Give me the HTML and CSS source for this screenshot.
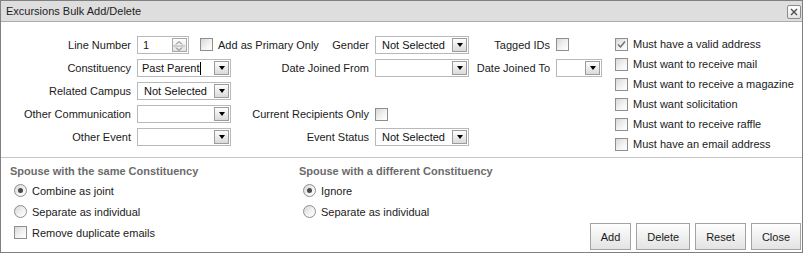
FILE: index.html
```html
<!DOCTYPE html>
<html>
<head>
<meta charset="utf-8">
<link rel="stylesheet" href="styles.css">
</head>
<body>
<div class="dialog">
  <div class="titlebar">
    <span class="title">Excursions Bulk Add/Delete</span>
    <span class="close-x"><svg width="8" height="8" viewBox="0 0 8 8"><path d="M1 1 L7 7 M7 1 L1 7" stroke="#505050" stroke-width="1.4" fill="none"/></svg></span>
  </div>
  <div class="top">
    <div class="form-grid">
      <span class="lbl c1">Line Number</span>
      <div class="row1-mid">
        <div class="spinner">
          <span class="spin-val">1</span>
          <span class="spin-btn"><svg width="12" height="14" viewBox="0 0 12 14"><polyline points="3,5.5 6,2.5 9,5.5" stroke="#707070" fill="none"/><line x1="0" y1="7" x2="12" y2="7" stroke="#b0b0b0"/><polyline points="3,8.5 6,11.5 9,8.5" stroke="#707070" fill="none"/></svg></span>
        </div>
        <span class="check-item first-check"><span class="cb"></span>Add as Primary Only</span>
        <span class="lbl push">Gender</span>
      </div>
      <div class="combo"><span class="val">Not Selected</span><span class="dd"></span></div>
      <span class="lbl">Tagged IDs</span>
      <span class="cb"></span>

      <span class="lbl c1">Constituency</span>
      <div class="combo"><span class="val edit">Past Parent<span class="caret"></span></span><span class="dd"></span></div>
      <span class="lbl">Date Joined From</span>
      <div class="combo"><span class="val"></span><span class="dd"></span></div>
      <span class="lbl">Date Joined To</span>
      <div class="combo"><span class="val"></span><span class="dd"></span></div>

      <span class="lbl c1">Related Campus</span>
      <div class="combo"><span class="val">Not Selected</span><span class="dd"></span></div>

      <span class="lbl c1">Other Communication</span>
      <div class="combo"><span class="val"></span><span class="dd"></span></div>
      <span class="lbl">Current Recipients Only</span>
      <span class="cb"></span>

      <span class="lbl c1">Other Event</span>
      <div class="combo"><span class="val"></span><span class="dd"></span></div>
      <span class="lbl">Event Status</span>
      <div class="combo"><span class="val">Not Selected</span><span class="dd"></span></div>
    </div>
    <div class="checklist">
      <div class="check-item row"><span class="cb"><svg width="11" height="11" viewBox="0 0 11 11"><polyline points="2,5.5 4.5,8 9,2.5" stroke="#707070" stroke-width="1.5" fill="none"/></svg></span>Must have a valid address</div>
      <div class="check-item row"><span class="cb"></span>Must want to receive mail</div>
      <div class="check-item row"><span class="cb"></span>Must want to receive a magazine</div>
      <div class="check-item row"><span class="cb"></span>Must want solicitation</div>
      <div class="check-item row"><span class="cb"></span>Must want to receive raffle</div>
      <div class="check-item row"><span class="cb"></span>Must have an email address</div>
    </div>
  </div>
  <div class="bottom">
    <div class="group group-left">
      <div class="group-title">Spouse with the same Constituency</div>
      <div class="opt first-opt"><span class="rb on"><span class="dot"></span></span>Combine as joint</div>
      <div class="opt"><span class="rb"></span>Separate as individual</div>
      <div class="opt"><span class="cb"></span>Remove duplicate emails</div>
    </div>
    <div class="group">
      <div class="group-title">Spouse with a different Constituency</div>
      <div class="opt first-opt"><span class="rb on"><span class="dot"></span></span>Ignore</div>
      <div class="opt"><span class="rb"></span>Separate as individual</div>
    </div>
    <div class="actions">
      <button class="btn">Add</button>
      <button class="btn">Delete</button>
      <button class="btn">Reset</button>
      <button class="btn">Close</button>
    </div>
  </div>
</div>
</body>
</html>
```
FILE: styles.css
```css
body {
  margin: 0;
  background: #fff;
  font-family: "Liberation Sans", Arial, sans-serif;
  font-size: 11px;
  color: #1a1a1a;
}

.dialog {
  width: 803px;
  height: 253px;
  box-sizing: border-box;
  border: 1px solid #808080;
  display: flex;
  flex-direction: column;
  background: #fff;
}

.titlebar {
  height: 20px;
  flex: none;
  display: flex;
  align-items: center;
  padding: 0 1px 0 5px;
  background: #dedede;
  border-bottom: 1px solid #ababab;
}

.title {
  color: #222;
}

.close-x {
  margin-left: auto;
  width: 14px;
  height: 14px;
  box-sizing: border-box;
  border: 1px solid #8c8c8c;
  border-radius: 2px;
  background: linear-gradient(#ffffff, #e4e4e4);
  display: flex;
  align-items: center;
  justify-content: center;
  margin-top: 2px;
}

.top {
  flex: none;
  display: flex;
  align-items: flex-start;
  padding: 13px 0 3px 0;
  border-bottom: 1px solid #c6c6c6;
}

.form-grid {
  display: grid;
  grid-template-columns: 130px 94px 132px 94px 75px 46px;
  grid-template-rows: 19px 18px 18px 18px 18px;
  column-gap: 6px;
  row-gap: 5px;
  align-items: center;
}

.lbl {
  text-align: right;
  white-space: nowrap;
}

.c1 {
  grid-column: 1;
}

.row1-mid {
  grid-column: 2 / 4;
  display: flex;
  align-items: center;
  height: 18px;
}

.push {
  margin-left: auto;
}

.spinner {
  width: 52px;
  height: 18px;
  box-sizing: border-box;
  border: 1px solid #b9b9b9;
  display: flex;
  background: #fff;
}

.spin-val {
  flex: 1;
  padding-left: 5px;
  line-height: 16px;
}

.spin-btn {
  width: 15px;
  margin: 1px 1px 1px 0;
  box-sizing: border-box;
  border: 1px solid #a8a8a8;
  background: linear-gradient(#fdfdfd, #e2e2e2);
  display: flex;
}

.check-item {
  display: flex;
  align-items: center;
  gap: 5px;
  white-space: nowrap;
}

.first-check {
  margin-left: 11px;
}

.combo {
  height: 18px;
  box-sizing: border-box;
  border: 1px solid #b9b9b9;
  display: flex;
  background: #fff;
}

.combo .val {
  flex: 1;
  padding-left: 6px;
  line-height: 16px;
  white-space: nowrap;
  overflow: hidden;
  color: #111;
}

.combo .val.edit {
  padding-left: 4px;
}

.caret {
  display: inline-block;
  width: 1px;
  height: 13px;
  background: #000;
  vertical-align: -3px;
  margin-left: 1px;
}

.dd {
  width: 15px;
  flex: none;
  margin: 1px 1px 1px 0;
  box-sizing: border-box;
  border: 1px solid #9c9c9c;
  background: linear-gradient(#fdfdfd, #dadada);
  display: flex;
  align-items: center;
  justify-content: center;
}

.dd::after {
  content: "";
  border-top: 4px solid #000;
  border-left: 3.5px solid transparent;
  border-right: 3.5px solid transparent;
}

.cb {
  width: 13px;
  height: 13px;
  flex: none;
  box-sizing: border-box;
  border: 1px solid #8e8e8e;
  background: linear-gradient(135deg, #d8d8d8 0%, #f2f2f2 55%, #ffffff 100%);
  display: flex;
  align-items: center;
  justify-content: center;
  justify-self: start;
}

.checklist {
  margin-left: 13px;
  margin-top: -1px;
  display: flex;
  flex-direction: column;
}

.checklist .row {
  height: 20px;
}

.bottom {
  flex: 1;
  display: flex;
  padding: 7px 1px 2px 9px;
}

.group {
  flex: none;
}

.group-left {
  width: 289px;
}

.group-title {
  font-weight: bold;
  color: #6b6b6b;
  line-height: 13px;
}

.opt {
  display: flex;
  align-items: center;
  gap: 5px;
  height: 21px;
  padding-left: 4px;
  white-space: nowrap;
}

.first-opt {
  margin-top: 2px;
}

.rb {
  width: 13px;
  height: 13px;
  flex: none;
  box-sizing: border-box;
  border: 1px solid #8e8e8e;
  border-radius: 50%;
  background: linear-gradient(135deg, #d6d6d6 0%, #f2f2f2 55%, #ffffff 100%);
  display: flex;
  align-items: center;
  justify-content: center;
}

.dot {
  width: 5px;
  height: 5px;
  border-radius: 50%;
  background: #4a4a4a;
}

.actions {
  margin-left: auto;
  align-self: flex-end;
  display: flex;
  gap: 5px;
}

.btn {
  height: 27px;
  box-sizing: border-box;
  padding: 0 10px;
  margin: 0;
  border: 1px solid #a3a3a3;
  border-radius: 0;
  background: linear-gradient(#fefefe, #e3e3e3);
  font-family: inherit;
  font-size: 11px;
  color: #1a1a1a;
}
```
